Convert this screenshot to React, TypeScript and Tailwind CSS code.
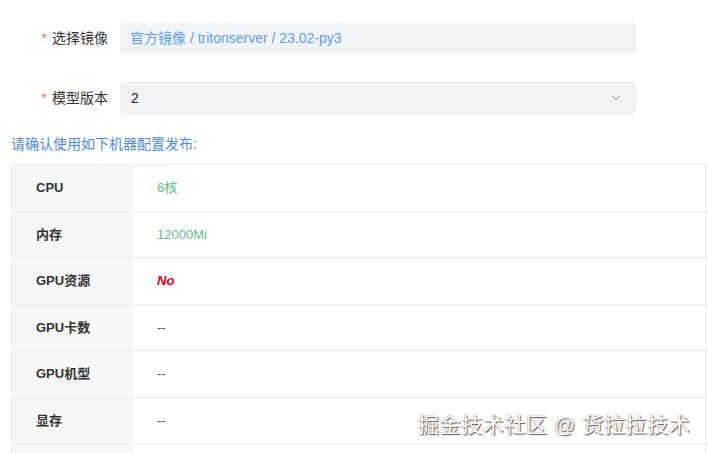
import { ChevronDown } from "lucide-react";

const rows: { label: string; value: string; tone: "green" | "red" | "plain" }[] = [
  { label: "CPU", value: "6核", tone: "green" },
  { label: "内存", value: "12000Mi", tone: "green" },
  { label: "GPU资源", value: "No", tone: "red" },
  { label: "GPU卡数", value: "--", tone: "plain" },
  { label: "GPU机型", value: "--", tone: "plain" },
  { label: "显存", value: "--", tone: "plain" },
  { label: "", value: "", tone: "plain" },
];

function valueClass(tone: "green" | "red" | "plain") {
  if (tone === "green") return "text-[#5fba8c]";
  if (tone === "red") return "text-[#e8000b] font-bold italic";
  return "text-[#555]";
}

export default function App() {
  return (
    <div
      className="relative h-[453px] w-[708px] overflow-hidden bg-white text-[14px]"
      style={{ fontFamily: '"Liberation Sans", "Noto Sans CJK SC", sans-serif' }}
    >
      {/* form */}
      <div className="flex flex-col gap-[28px] pt-[22px]">
        <div className="flex items-center">
          <label className="w-[120px] pr-3 text-right text-[#333]">
            <span className="mr-[5px] text-[#f56c6c]">*</span>选择镜像
          </label>
          <div className="flex h-[32px] w-[516px] items-center rounded-[4px] bg-[#f2f3f5] px-[10px] text-[#5b9ef5]">
            官方镜像 / tritonserver / 23.02-py3
          </div>
        </div>
        <div className="flex items-center">
          <label className="w-[120px] pr-3 text-right text-[#333]">
            <span className="mr-[5px] text-[#f56c6c]">*</span>模型版本
          </label>
          <div className="flex h-[32px] w-[516px] items-center justify-between rounded-[4px] border border-[#eceef1] bg-[#f2f3f5] pl-[10px] pr-[12px] text-[#222]">
            <span>2</span>
            <ChevronDown className="h-[14px] w-[14px] text-[#888]" strokeWidth={1.6} />
          </div>
        </div>
      </div>

      <div className="mt-[20px] pl-[11px] text-[#4a8cf0]">请确认使用如下机器配置发布:</div>

      {/* spec table */}
      <div className="ml-[11px] mr-[2px] mt-[9px] border-l border-r border-t border-[#ebebeb] text-[13px]">
        {rows.map((r, i) => (
          <div key={i} className="flex h-[46.6px] border-b border-[#ebebeb]">
            <div className="flex w-[121px] items-center bg-[#f7f7f7] pl-[24px] font-bold text-[#333]">
              {r.label}
            </div>
            <div className={`flex items-center pl-[24px] ${valueClass(r.tone)}`}>{r.value}</div>
          </div>
        ))}
      </div>

      {/* watermark */}
      <div
        className="pointer-events-none absolute left-[418px] top-[409px] text-[21px] tracking-[0.6px] text-white"
        style={{ textShadow: "1px 1px 1px #555, -0.5px -0.5px 0 #999" }}
      >
        掘金技术社区 @ 货拉拉技术
      </div>
    </div>
  );
}
